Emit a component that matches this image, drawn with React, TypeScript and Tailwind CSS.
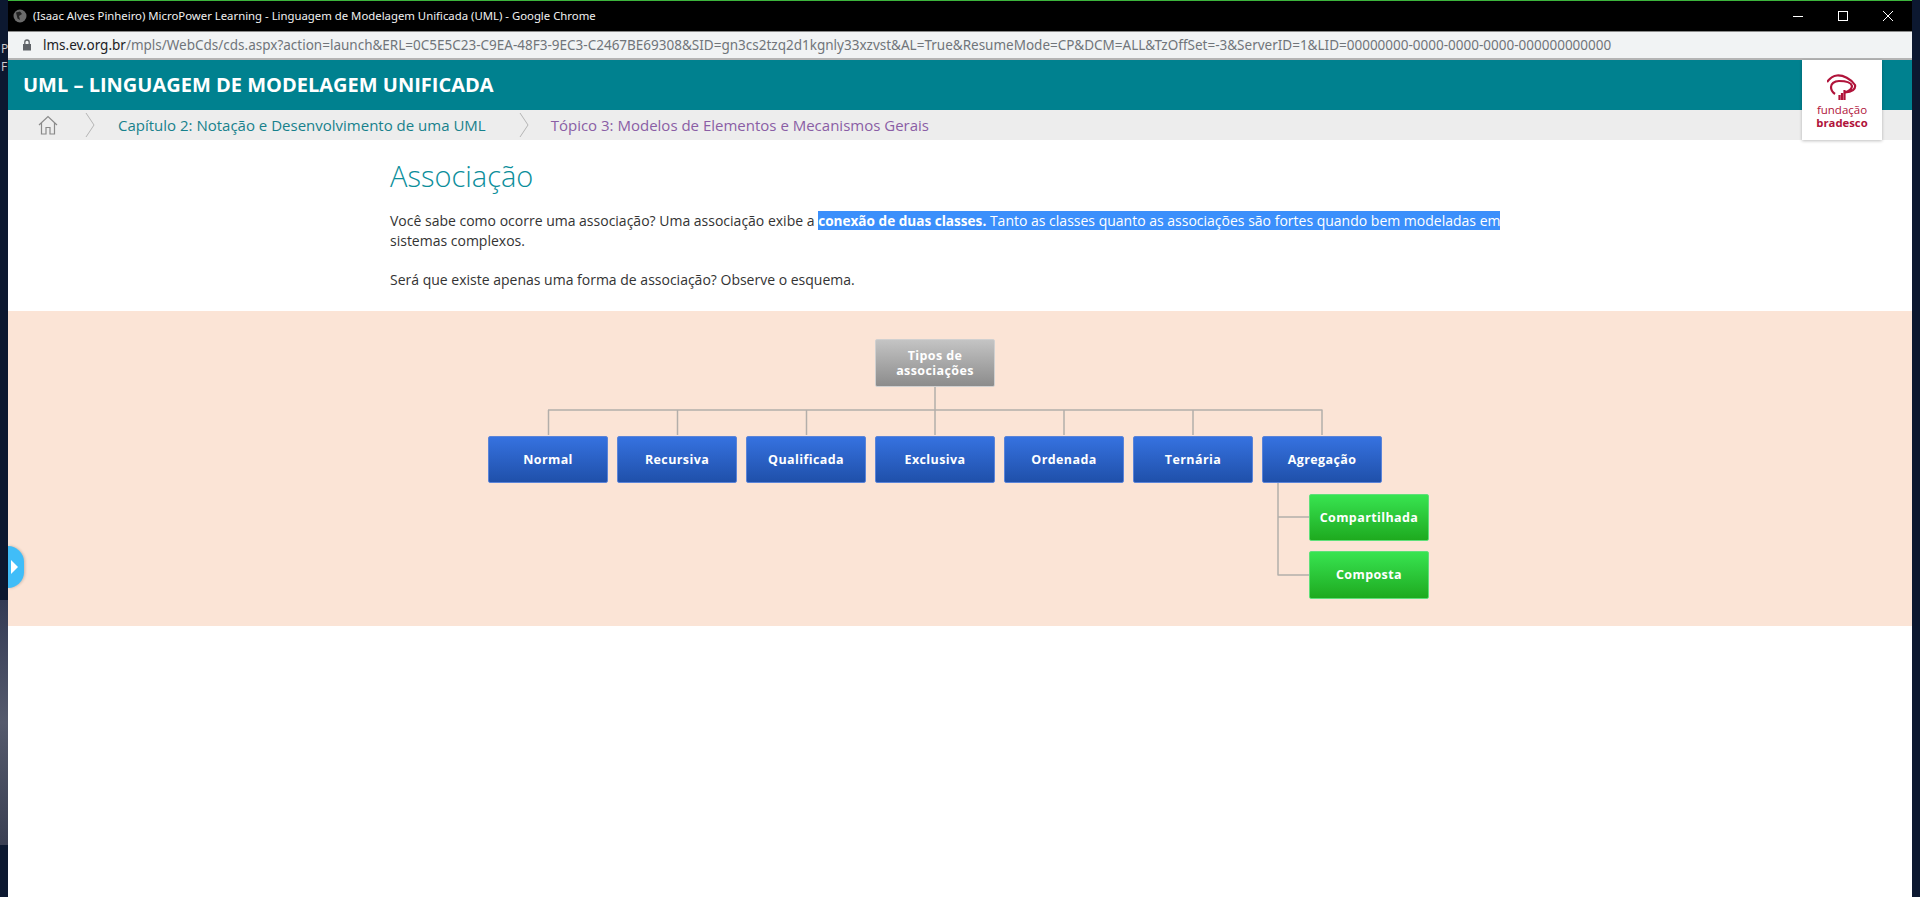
const NODE = "flex h-[47.5px] w-[120px] items-center justify-center rounded-[2px] border text-center text-[12.5px] font-bold leading-[15px] tracking-[0.4px] text-white bg-gradient-to-b";
const BLUE = NODE + " border-[#5b84d8] from-[#3672e0] to-[#1f50aa]";
const GREEN = NODE + " border-[#5fe07a] from-[#38e450] to-[#1eaa1e]";
const GRAY = NODE + " border-[#d0d0d0] from-[#c4c4c4] to-[#8c8c8c]";

function Connectors() {
  return (
    <svg className="absolute left-0 top-0" width="940" height="260" fill="none" stroke="#b3aeaa" strokeWidth="1.5">
      <path d="M447 47V96M60.5 71V96M189.5 71V96M318.5 71V96M576 71V96M705 71V96M834 71V96M60 71H834.5M790 143V236.5M790 178H821M790 236H821" />
    </svg>
  );
}

function Logo() {
  return (
    <div className="absolute right-[30px] top-0 z-10 flex h-[80px] w-[80px] flex-col items-center bg-white pt-[14px] shadow-[0_1px_3px_rgba(0,0,0,0.25)]">
      <svg width="30" height="26" viewBox="0 0 30 26" fill="none" stroke="#b0133a" strokeWidth="2.2">
        <path d="M0 8C3 4 6 2 10 1.5C16 1 24 5 28 11C29 15 25 18 18 18.5C22 17 25 15 25 12C24 8 18 7 12 7C7 7 4 10 4 13C4 16 5 18 8 20" />
        <path d="M12.5 26V21M15 26V19M17.5 26V16" />
      </svg>
      <div className="mt-[4px] text-[11.5px] leading-[12px] text-[#b0133a]">fundação</div>
      <div className="text-[11.3px] font-bold leading-[13px] text-[#b0133a]">bradesco</div>
    </div>
  );
}

export default function App() {
  return (
    <div className="relative h-[897px] w-[1920px] overflow-hidden bg-[#0c1830] px-[8px] font-['Open_Sans',sans-serif]">
      <div className="absolute left-0 top-[600px] h-[245px] w-[8px] bg-gradient-to-b from-[#333a54] via-[#555a6c] to-[#3a3f52]" />
      <div className="absolute left-[1px] top-[40px] text-[12px] leading-[18px] text-[#cfcfcf]">P<br />F</div>
      <div className="relative flex h-full flex-col">
        <div className="h-px w-full bg-[#3cb43c]" />
        <div className="flex h-[30px] items-center bg-black pl-[5px] pr-[18px] font-['Noto_Sans',sans-serif] text-[11.35px] text-[#f0f0f0]">
          <svg width="14" height="14" viewBox="0 0 14 14"><circle cx="7" cy="7" r="6.5" fill="#6b6b6b" /><path d="M3 3.5L7 2.5L9 5L6 7L7 11L4.5 9.5Z" fill="#222" /></svg>
          <span className="ml-[6px]">(Isaac Alves Pinheiro) MicroPower Learning - Linguagem de Modelagem Unificada (UML) - Google Chrome</span>
          <div className="ml-auto flex items-center gap-[33px]">
            <svg width="12" height="12" viewBox="0 0 12 12" stroke="#fff" fill="none"><path d="M1 6.5H11" /></svg>
            <svg width="12" height="12" viewBox="0 0 12 12" stroke="#fff" fill="none"><rect x="1.5" y="1.5" width="9" height="9" /></svg>
            <svg width="12" height="12" viewBox="0 0 12 12" stroke="#fff" fill="none"><path d="M1 1L11 11M11 1L1 11" /></svg>
          </div>
        </div>
        <div className="h-px bg-[#8a8a8a]" />
        <div className="flex h-[26px] items-center bg-[#f1f3f4] pl-[14px] font-['Noto_Sans',sans-serif] text-[13.5px] text-[#70757a]">
          <svg width="10" height="12" viewBox="0 0 10 12" fill="#5f6368"><path d="M1 5H9V11.5H1Z" /><path d="M2.8 5V3.2A2.2 2.2 0 0 1 7.2 3.2V5" fill="none" stroke="#5f6368" strokeWidth="1.3" /></svg>
          <span className="ml-[11px] text-[#202124]">lms.ev.org.br</span>
          <span>/mpls/WebCds/cds.aspx?action=launch&amp;ERL=0C5E5C23-C9EA-48F3-9EC3-C2467BE69308&amp;SID=gn3cs2tzq2d1kgnly33xzvst&amp;AL=True&amp;ResumeMode=CP&amp;DCM=ALL&amp;TzOffSet=-3&amp;ServerID=1&amp;LID=00000000-0000-0000-0000-000000000000</span>
        </div>
        <div className="h-[2px] bg-[#b4b4b4]" />
        <div className="relative flex flex-1 flex-col bg-white">
          <div className="flex h-[50px] items-center bg-[#00818f] pl-[15px] text-[20px] font-bold text-white">UML – LINGUAGEM DE MODELAGEM UNIFICADA</div>
          <div className="flex h-[30px] items-center bg-[#ededed] pl-[30px] text-[15px]">
            <svg width="20" height="20" viewBox="0 0 20 20" fill="none" stroke="#8a8a8a" strokeWidth="1.2"><path d="M1 10L10 1.5L19 10M3.5 8V19H8V12.5H12V19H16.5V8" /></svg>
            <svg className="ml-[27px]" width="10" height="26" viewBox="0 0 10 26" fill="none" stroke="#b5b5b5"><path d="M1 1L9 13L1 25" /></svg>
            <span className="ml-[23px] text-[#17818c]">Capítulo 2: Notação e Desenvolvimento de uma UML</span>
            <svg className="ml-[33px]" width="10" height="26" viewBox="0 0 10 26" fill="none" stroke="#b5b5b5"><path d="M1 1L9 13L1 25" /></svg>
            <span className="ml-[22px] text-[#8a5ea5]">Tópico 3: Modelos de Elementos e Mecanismos Gerais</span>
          </div>
          <Logo />
          <div className="h-[171px] pl-[382px] pt-[16px] text-[14px] leading-[20px] text-[#333]">
            <h1 className="text-[29px] font-light leading-[40px] text-[#0b8e9b]">Associação</h1>
            <p className="mt-[15px] w-[1125px]">
              Você sabe como ocorre uma associação? Uma associação exibe a{" "}
              <span className="bg-[#3b8ffb] text-white"><b className="text-[13.6px] font-bold">conexão de duas classes.</b> Tanto as classes quanto as associações são fortes quando bem modeladas em</span>{" "}
              sistemas complexos.
            </p>
            <p className="mt-[19px]">Será que existe apenas uma forma de associação? Observe o esquema.</p>
          </div>
          <div className="h-[315px] bg-[#fbe4d6] pl-[480px] pt-[28px]">
            <div className="relative flex w-[940px] flex-col">
              <Connectors />
              <div className={"relative ml-[387px] " + GRAY}>Tipos de<br />associações</div>
              <div className="relative mt-[49px] flex gap-[9px]">
                {["Normal", "Recursiva", "Qualificada", "Exclusiva", "Ordenada", "Ternária", "Agregação"].map((n) => (
                  <div key={n} className={BLUE}>{n}</div>
                ))}
              </div>
              <div className="relative ml-[821px] mt-[10.5px] flex flex-col gap-[10px]">
                <div className={GREEN}>Compartilhada</div>
                <div className={GREEN}>Composta</div>
              </div>
            </div>
          </div>
          <div className="absolute left-0 top-[486px] flex h-[42px] w-[16px] items-center rounded-r-[21px] bg-[#40bdf8] pl-[3px] shadow-[1px_0_3px_rgba(0,0,0,0.2)]">
            <svg width="7" height="14" viewBox="0 0 7 14" fill="#fff"><path d="M0 0L7 7L0 14Z" /></svg>
          </div>
        </div>
      </div>
    </div>
  );
}
